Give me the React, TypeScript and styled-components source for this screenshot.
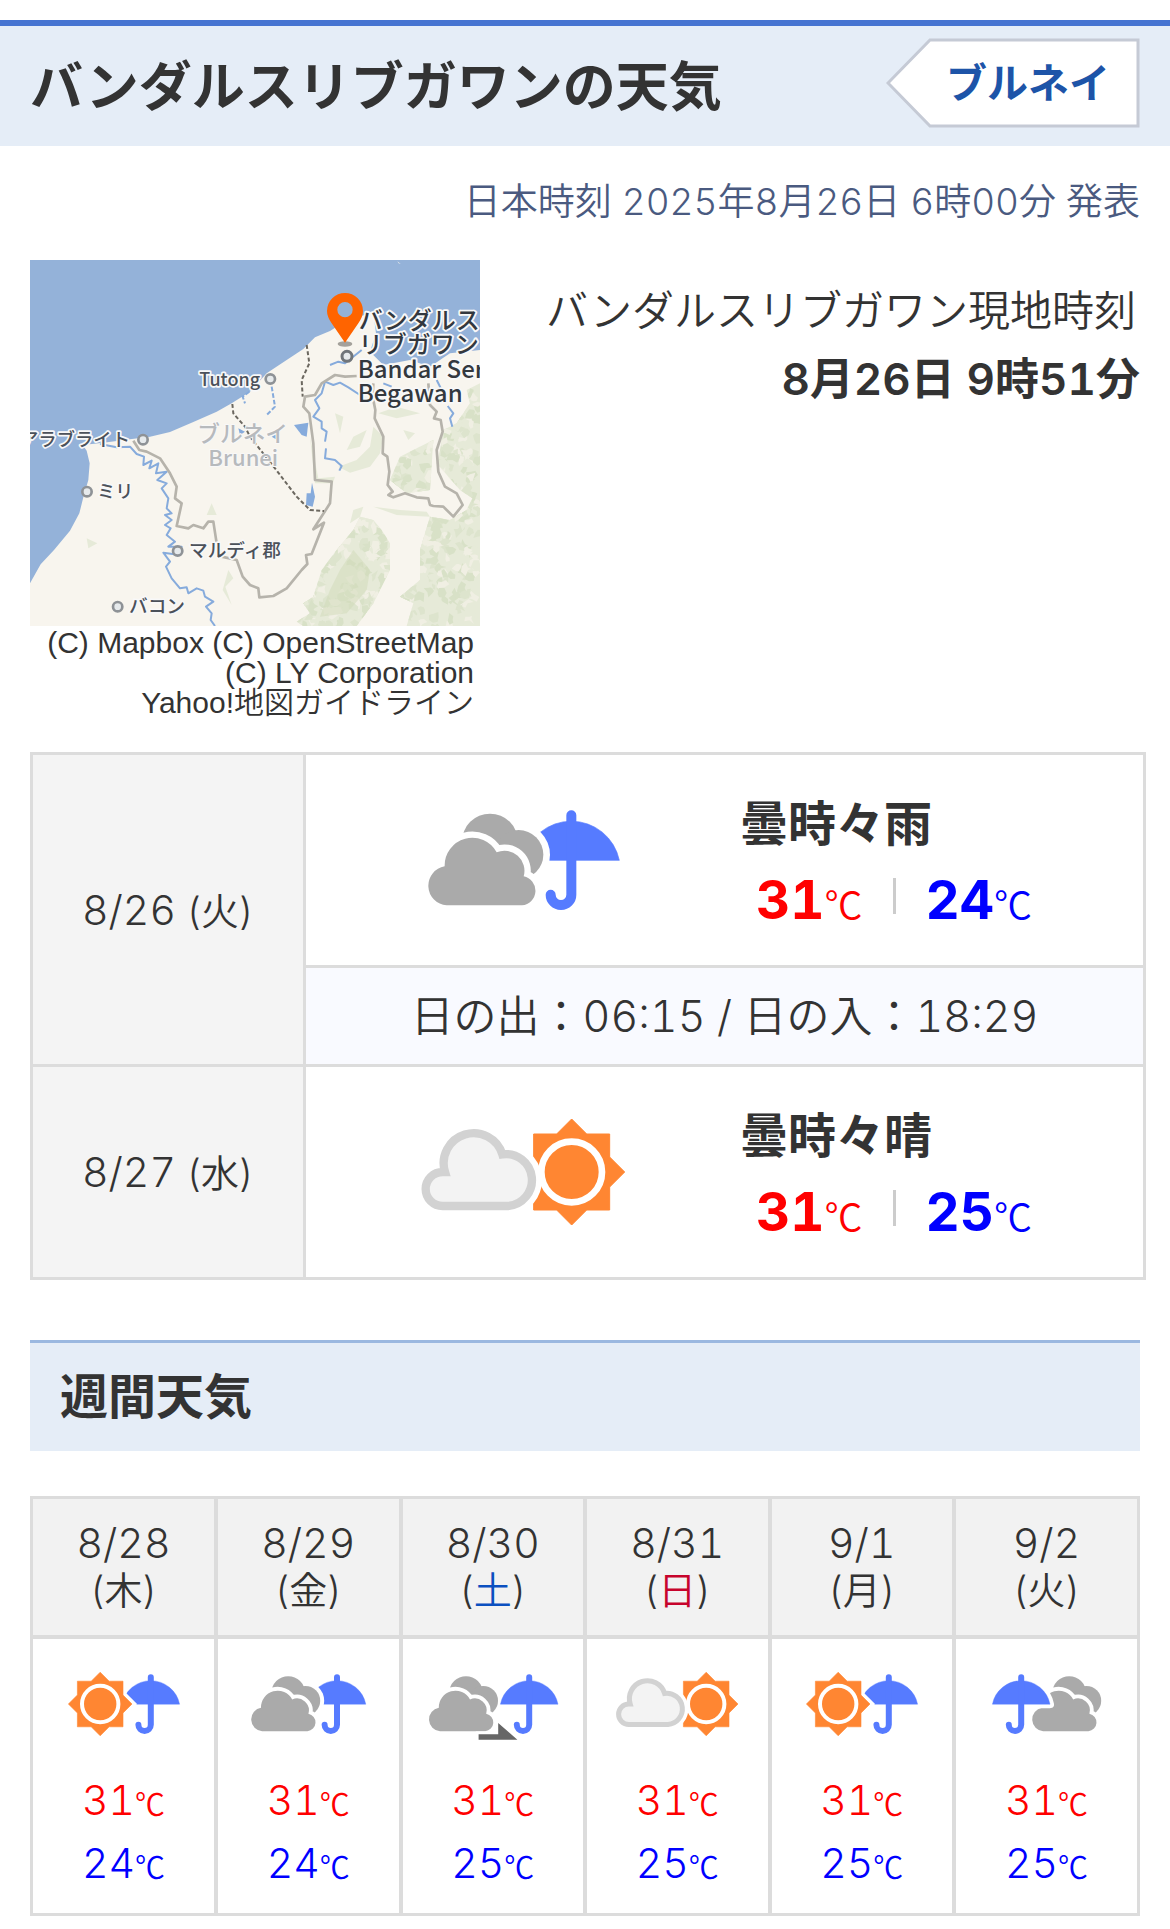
import React from "react";
import styled, { createGlobalStyle, css } from "styled-components";

const GlobalStyle = createGlobalStyle`
  * { box-sizing: border-box; }
  body {
    margin: 0;
    background: #fff;
    color: #333;
    font-family: Inter, "Noto Sans CJK JP", sans-serif;
    font-weight: 350;
    font-variant-numeric: tabular-nums;
  }
  h1, h2, p { margin: 0; }
`;

const Page = styled.main`
  padding: 20px 0 12px;
`;

const Header = styled.header`
  display: flex;
  align-items: flex-start;
  justify-content: space-between;
  height: 126px;
  padding: 12px 30px 0;
  border-top: 6px solid #4674d1;
  background: #e5edf7;
`;

const Title = styled.h1`
  font-size: 53px;
  line-height: 99px;
  font-weight: 600;
`;

const CountryLink = styled.a`
  position: relative;
  display: flex;
  align-items: center;
  justify-content: flex-end;
  width: 254px;
  height: 90px;
  padding: 0 30px 7px 0;
  color: #1d54a8;
  font-size: 41px;
  font-weight: 600;
  text-decoration: none;
`;

const TagShape = styled.svg`
  position: absolute;
  inset: 0;
`;

const TagText = styled.span`
  position: relative;
`;

const Announced = styled.p`
  padding: 29px 30px 0;
  color: #4a5a80;
  font-size: 37px;
  line-height: 54px;
  text-align: right;
`;

const Place = styled.section`
  display: flex;
  justify-content: space-between;
  padding: 31px 30px 34px;
`;

const MapFigure = styled.figure`
  width: 450px;
  margin: 0;
`;

const MapDrawing = styled.svg`
  display: block;
  width: 100%;
`;

const Credit = styled.figcaption`
  padding: 2px 6px 0 0;
  font-family: "Liberation Sans", "Noto Sans CJK JP", sans-serif;
  font-size: 30px;
  line-height: 30px;
  text-align: right;
`;

const Clock = styled.div`
  padding-top: 16px;
  text-align: right;
`;

const ClockName = styled.p`
  padding-right: 4px;
  font-size: 42px;
  line-height: 69px;
`;

const ClockTime = styled.p`
  font-size: 44px;
  line-height: 69px;
  font-weight: 600;
`;

const DayTable = styled.table`
  width: calc(100% - 54px);
  margin-left: 30px;
  border-collapse: collapse;
  table-layout: fixed;
  th, td { padding: 0; border: 3px solid #dcdcdc; }
  th { width: 273px; background: #f4f4f4; font-weight: 350; }
`;

const DayRow = styled.tr`
  height: 213px;
`;

const SunRow = styled.tr`
  height: 99px;
  td {
    background: #f9faff;
    font-size: 43px;
    line-height: 60px;
    text-align: center;
  }
`;

const DateText = styled.span`
  font-size: 41px;
  line-height: 48px;
`;

const WeekdayText = styled.span<{ $inline?: boolean }>`
  margin-left: ${(p) => (p.$inline ? "6px" : "0")};
  font-size: 38px;
  line-height: 46px;
`;

const DayName = styled.span<{ $kind?: "sat" | "sun" }>`
  color: ${(p) => (p.$kind === "sat" ? "#0b50c0" : p.$kind === "sun" ? "#c7042c" : "inherit")};
`;

const Forecast = styled.div`
  display: grid;
  grid-template-columns: 434px 1fr;
  align-items: center;
`;

const ForecastIcon = styled.div`
  display: flex;
  justify-content: center;
`;

const ForecastText = styled.div`
  padding-top: 3px;
`;

const Condition = styled.p`
  font-size: 48px;
  line-height: 72px;
  font-weight: 600;
`;

const BigTemps = styled.div`
  display: flex;
  align-items: center;
  margin-top: 4px;
  padding-left: 16px;
  line-height: 72px;
`;

const Divider = styled.span`
  width: 3px;
  height: 36px;
  margin: 0 30px 8px;
  background: #ccc;
`;

const Temp = styled.span<{ $kind: "high" | "low"; $big?: boolean }>`
  color: ${(p) => (p.$kind === "high" ? "#f00" : "#00f")};
  ${(p) =>
    p.$big
      ? css`
          font-size: 53px;
          font-weight: 700;
        `
      : css`
          display: block;
          font-size: 41px;
          line-height: 63px;
        `}
`;

const Unit = styled.span<{ $big?: boolean }>`
  font-family: "Noto Sans CJK JP", sans-serif;
  font-size: ${(p) => (p.$big ? "38px" : "30px")};
  line-height: 1;
  font-weight: 350;
`;

const WeekHeading = styled.h2`
  margin: 60px 30px 45px;
  padding: 18px 30px;
  border-top: 3px solid #9bb8e0;
  background: #e5edf7;
  font-size: 48px;
  line-height: 72px;
  font-weight: 600;
`;

const WeekTable = styled.table`
  width: calc(100% - 60px);
  margin: 0 30px;
  border: 3px solid #dcdcdc;
  border-collapse: collapse;
  table-layout: fixed;
  text-align: center;
  th, td { padding: 0; vertical-align: top; }
  th + th, td + td { border-left: 4px solid #dcdcdc; }
  th {
    height: 139px;
    padding-top: 20px;
    background: #f2f2f2;
    font-weight: 350;
  }
  td {
    height: 278px;
    padding-top: 29px;
    border-top: 4px solid #dcdcdc;
  }
  th > span { display: block; }
`;

const WeekIcon = styled.div`
  display: flex;
  justify-content: center;
  margin-bottom: 29px;
`;

const Glyph = styled.svg<{ $big?: boolean }>`
  display: block;
  width: ${(p) => (p.$big ? 240 : 144)}px;
  height: ${(p) => (p.$big ? 120 : 72)}px;
`;

type IconKind = "cloud-rain" | "cloud-sun" | "sun-rain" | "cloud-then-rain" | "rain-cloud";

const FRONT_CLOUD =
  "M141 316 A59 59 0 0 1 135 199 A83 83 0 0 1 291 157 A60 60 0 0 1 372 229 A44 44 0 0 1 367 316 Z";
const LIGHT_CLOUD =
  "M129 282 A51 51 0 0 1 129 180 H136 A89 89 0 0 1 308 127 A78 78 0 1 1 325 282 Z";

function Umbrella({ x, gap }: { x: number; gap?: boolean }) {
  return (
    <g transform={`translate(${x} 0)`}>
      {gap && <path d="M-144 181 A147 147 0 0 1 144 181 Z" fill="#fff" stroke="#fff" strokeWidth="40" strokeLinejoin="round" />}
      <path d="M-144 181 A147 147 0 0 1 144 181 Z" fill="#567bff" stroke="#567bff" strokeWidth="2" />
      <path d="M0 46 V284 A31 31 0 0 1 -62 284" fill="none" stroke="#567bff" strokeWidth="30" strokeLinecap="round" />
    </g>
  );
}

function DarkCloud({ x }: { x: number }) {
  return (
    <g transform={`translate(${x} 0)`} fill="#aaa">
      <circle cx="357" cy="164" r="94" fill="#fff" />
      <circle cx="271" cy="125" r="84" />
      <circle cx="357" cy="164" r="74" />
      <path d={FRONT_CLOUD} fill="#fff" stroke="#fff" strokeWidth="38" />
      <path d={FRONT_CLOUD} />
    </g>
  );
}

function Sun({ x, gap }: { x: number; gap?: boolean }) {
  const star = "M0 -159 L45 -114 H114 V-45 L159 0 L114 45 V114 H45 L0 159 L-45 114 H-114 V45 L-159 0 L-114 -45 V-114 H-45 Z";
  return (
    <g transform={`translate(${x} 180)`}>
      {gap && <path d={star} fill="#fff" stroke="#fff" strokeWidth="36" />}
      <path d={star} fill="#ff8632" stroke="#ff8632" strokeWidth="3" strokeLinejoin="round" />
      <circle r="91" fill="none" stroke="#fff" strokeWidth="20" />
    </g>
  );
}

function WeatherIcon({ kind, label, big }: { kind: IconKind; label: string; big?: boolean }) {
  return (
    <Glyph viewBox="0 0 720 360" role="img" aria-label={label} $big={big}>
      {kind === "cloud-rain" && (
        <>
          <Umbrella x={505} />
          <DarkCloud x={-10} />
        </>
      )}
      {kind === "cloud-sun" && (
        <>
          <Sun x={506} />
          <g transform="translate(-10 0)">
            <path d={LIGHT_CLOUD} fill="#fff" stroke="#fff" strokeWidth="60" />
            <path d={LIGHT_CLOUD} fill="#f3f3f3" stroke="#d2d2d2" strokeWidth="25" />
          </g>
        </>
      )}
      {kind === "sun-rain" && (
        <>
          <Umbrella x={494} />
          <Sun x={241} gap />
        </>
      )}
      {kind === "cloud-then-rain" && (
        <>
          <DarkCloud x={-46} />
          <path d="M288 331 H386 V275 L482 359 H288 Z" fill="#666" stroke="#fff" strokeWidth="28" paintOrder="stroke" />
          <Umbrella x={541} />
        </>
      )}
      {kind === "rain-cloud" && (
        <>
          <DarkCloud x={200} />
          <Umbrella x={231} gap />
        </>
      )}
    </Glyph>
  );
}

const places = [
  { name: "Tutong", tx: 538, ty: 407, cx: 751, cy: 387, size: 54 },
  { name: "アラブライト", tx: 0, ty: 588, cx: 369, cy: 569, size: 55 },
  { name: "ミリ", tx: 232, ty: 744, cx: 201, cy: 725, size: 54 },
  { name: "マルディ郡", tx: 507, ty: 922, cx: 473, cy: 903, size: 56 },
  { name: "バコン", tx: 327, ty: 1089, cx: 293, cy: 1070, size: 56 },
];

const forests = [
  "M1000 840 L1020 800 L1060 810 L1085 840 L1110 880 L1110 960 L1080 1020 L1060 1060 L1010 1128 H850 L830 1115 L870 1090 L850 1060 L880 1040 L905 960 L950 900 Z",
  "M1230 800 L1290 810 L1340 780 L1380 700 V1128 H1160 L1180 1060 L1140 1040 L1200 990 L1200 900 Z",
  "M1380 400 L1340 420 L1350 460 L1310 520 L1270 540 L1260 600 L1250 640 L1320 720 L1380 760 Z",
  "M1180 600 L1240 570 L1230 720 L1160 730 L1110 690 L1140 620 Z",
];

const thinWoods = [
  "M1060 530 L1090 560 L1080 610 L1050 650 L990 668 L955 650 L1010 630 L1050 590 Z",
  "M1075 490 L1130 470 L1200 490 L1130 505 Z",
  "M1000 560 L1040 540 L1020 590 L980 600 Z",
  "M1150 540 L1185 550 L1165 570 Z",
  "M945 490 L970 500 L960 550 Z",
  "M575 760 L590 795 L560 795 Z",
  "M200 865 L232 880 L205 895 Z",
  "M625 960 L640 985 L616 1010 L635 1065 L608 1020 Z",
  "M1000 780 L1030 770 L1020 800 L990 820 Z",
  "M1060 770 L1140 780 L1220 785 L1230 800 L1130 795 Z",
  "M870 560 L885 700 L935 700 L925 740 L945 680 L895 685 Z",
];

/* Jagged leaf-like patches spread over the wooded hills, from a fixed seed. */
function woodPatches() {
  let seed = 7;
  const next = () => {
    seed = (seed * 16807) % 2147483647;
    return seed / 2147483647;
  };
  const tones = ["#d8e1c7", "#f0efe3", "#dde4cd", "#e6ead8"];
  return Array.from({ length: 900 }, (_, i) => {
    const x = 830 + next() * 550;
    const y = 400 + next() * 728;
    const points = Array.from({ length: 7 }, (_unused, k) => {
      const angle = (k / 7) * Math.PI * 2;
      const r = 4 + next() * 18;
      return `${Math.round(x + Math.cos(angle) * r)},${Math.round(y + Math.sin(angle) * r)}`;
    }).join(" ");
    return { points, fill: tones[i % 4] };
  });
}

const patches = woodPatches();

function AreaMap() {
  return (
    <MapDrawing viewBox="30 30 1350 1098" role="img" aria-label="バンダルスリブガワン周辺の地図">
      <defs>
        <clipPath id="woods">
          {forests.map((d) => (
            <path key={d} d={d} />
          ))}
        </clipPath>
      </defs>
      <rect x="30" y="30" width="1350" height="1098" fill="#94b2d9" />
      <path
        d="M30 1000 L62 943 L102 900 L150 842 L178 790 L190 742 L205 690 L209 640 L200 602 L188 585 L250 578 L330 568 L390 560 L450 546 L520 516 L590 485 L635 460 L690 425 L740 370 L800 330 L850 297 L885 262 L930 243 L990 205 L1060 190 L1068 250 L1050 305 L1090 345 L1170 330 L1230 350 L1290 310 L1380 300 V1128 H30 Z"
        fill="#f8f5ee"
      />
      <g fill="#e6ead8">
        {forests.map((d) => (
          <path key={d} d={d} />
        ))}
        {thinWoods.map((d) => (
          <path key={d} d={d} />
        ))}
      </g>
      <g clipPath="url(#woods)">
        {patches.map((p) => (
          <polygon key={p.points} points={p.points} fill={p.fill} />
        ))}
      </g>
      <path d="M960 960 L1000 900 L1050 960 L1040 1020 L980 1090 L900 1100 L930 1020 Z" fill="#cfdab8" opacity="0.5" />
      <g fill="none" stroke="#86abdc" strokeWidth="6" strokeLinejoin="round">
        <path d="M240 582 L290 592 L330 590 L350 612 L372 620 L370 645 L395 632 L388 655 L415 640 L408 670 L440 665 L412 690 L440 700 L425 715 L445 745 L440 775 L455 790 L435 795 L455 810 L435 825 L452 835 L440 855 L465 875 L445 890 L485 890 L480 915 L430 908 L450 935 L438 950 L455 985 L480 1015 L500 1012 L505 1030 L530 1015 L550 1022 L555 1040 L580 1055 L558 1070 L575 1090 L572 1110 L585 1128" />
        <path d="M688 425 L668 440 L675 460 M755 410 L765 470 L740 495" strokeDasharray="14 6" />
        <path d="M1020 435 L985 412 L960 398 L940 405 L915 395 L905 430 L885 450 L898 475 L880 500 L905 515 L905 535 L920 545 L915 575" />
        <path d="M918 595 L915 625 L945 630 L965 648 L958 662" />
        <path d="M1283 468 L1300 490 L1290 505 L1297 530 M1250 390 L1265 420 M930 345 L955 335 L975 340 L1025 300 M1090 400 L1115 410" />
      </g>
      <g fill="#86abdc">
        <path d="M822 525 L865 518 L860 560 L845 555 Z" />
        <path d="M876 698 L885 740 L878 770 L858 765 L860 730 L872 730 Z" />
        <path d="M655 535 L675 545 L660 555 Z M755 560 L775 550 L768 568 Z" />
      </g>
      <g fill="none" stroke="#b6b3ab" strokeWidth="8" strokeLinejoin="round">
        <path d="M340 572 L358 600 L380 605 L420 625 L450 670 L470 710 L465 745 L485 760 L470 828 L505 835 L520 825 L550 835 L565 815 L580 815 L590 880 L605 920 L650 930 L668 980 L690 1005 L715 1015 L718 1042 L760 1038 L800 1015 L845 960 L862 942 L858 915 L875 912 L912 818 L880 838 L930 760 L935 695 L885 690 L880 580 L868 490 L850 470 L855 440 L885 435 L905 400 L945 375 L975 380 L1010 378" />
        <path d="M1060 400 L1058 440 L1066 480 L1064 505 L1090 560 L1088 610 L1102 620 L1108 665 L1103 705 L1118 725 L1105 735 L1120 742 L1155 730 L1190 742 L1225 745 L1230 765 L1240 768 L1270 770 L1300 800 L1328 765 L1310 730 L1275 710 L1255 665 L1250 600 L1268 545 L1262 510 L1242 505 L1250 485 L1230 465 L1225 400" />
      </g>
      <g fill="none" stroke="#6b675f" strokeWidth="6" strokeDasharray="12 7">
        <path d="M860 285 L868 340 L845 390 L848 440" />
        <path d="M637 462 L640 490 L675 530 L690 560 L765 655 L830 740 L870 780 L912 783" />
      </g>
      <g fontFamily='"Noto Sans CJK JP", sans-serif' stroke="#f8f8f8" strokeLinejoin="round" paintOrder="stroke">
        <g fill="#b7babd" fontSize="68" fontWeight="500" strokeWidth="6">
          <text x="532" y="575">ブルネイ</text>
          <text x="565" y="647" fontSize="66">Brunei</text>
        </g>
        <g fill="#4b515a" fontWeight="500" strokeWidth="10">
          {places.map((p) => (
            <text key={p.name} x={p.tx} y={p.ty} fontSize={p.size}>
              {p.name}
            </text>
          ))}
        </g>
        <g fill="#33383f" fontSize="72" fontWeight="500" strokeWidth="11">
          <text x="1016" y="236">バンダルス</text>
          <text x="1016" y="310">リブガワン</text>
          <text x="1013" y="383">Bandar Seri</text>
          <text x="1013" y="456">Begawan</text>
        </g>
      </g>
      <g fill="#e6eaec" stroke="#8e9296" strokeWidth="8">
        {places.map((p) => (
          <circle key={p.name} cx={p.cx} cy={p.cy} r="14" />
        ))}
        <circle cx="981" cy="319" r="15" stroke="#70757a" strokeWidth="9" />
      </g>
      <ellipse cx="975" cy="282" rx="22" ry="8" fill="#8f8c86" opacity="0.8" />
      <path
        d="M975 278 L935 220 Q921 200 921 183 A54 54 0 0 1 1029 183 Q1029 200 1015 220 Z M975 156 A23 23 0 1 0 975 202 A23 23 0 1 0 975 156 Z"
        fill="#ff6400"
        fillRule="evenodd"
      />
      <path d="M1132 34 L1142 42 L1136 40 Z" fill="#f8f5ee" />
    </MapDrawing>
  );
}

function ForecastBlock({ kind, text, high, low }: { kind: IconKind; text: string; high: number; low: number }) {
  return (
    <Forecast>
      <ForecastIcon>
        <WeatherIcon kind={kind} label={text} big />
      </ForecastIcon>
      <ForecastText>
        <Condition>{text}</Condition>
        <BigTemps>
          <Temp $kind="high" $big>
            {high}
            <Unit $big>℃</Unit>
          </Temp>
          <Divider />
          <Temp $kind="low" $big>
            {low}
            <Unit $big>℃</Unit>
          </Temp>
        </BigTemps>
      </ForecastText>
    </Forecast>
  );
}

interface WeekDay {
  date: string;
  day: string;
  tone?: "sat" | "sun";
  kind: IconKind;
  label: string;
  high: number;
  low: number;
}

const week: WeekDay[] = [
  { date: "8/28", day: "木", kind: "sun-rain", label: "晴時々雨", high: 31, low: 24 },
  { date: "8/29", day: "金", kind: "cloud-rain", label: "曇時々雨", high: 31, low: 24 },
  { date: "8/30", day: "土", tone: "sat", kind: "cloud-then-rain", label: "曇後雨", high: 31, low: 25 },
  { date: "8/31", day: "日", tone: "sun", kind: "cloud-sun", label: "曇時々晴", high: 31, low: 25 },
  { date: "9/1", day: "月", kind: "sun-rain", label: "晴時々雨", high: 31, low: 25 },
  { date: "9/2", day: "火", kind: "rain-cloud", label: "雨時々曇", high: 31, low: 25 },
];

export default function App() {
  return (
    <>
      <GlobalStyle />
      <Page lang="ja">
        <Header>
          <Title>バンダルスリブガワンの天気</Title>
          <CountryLink href="#brunei">
            <TagShape width="254" height="90" viewBox="0 0 254 90" aria-hidden="true">
              <path d="M252 2 H44 L2 45 L44 88 H252 Z" fill="#fff" stroke="#c5cad5" strokeWidth="3" />
            </TagShape>
            <TagText>ブルネイ</TagText>
          </CountryLink>
        </Header>
        <Announced>日本時刻 2025年8月26日 6時00分 発表</Announced>
        <Place>
          <MapFigure>
            <AreaMap />
            <Credit>
              (C) Mapbox (C) OpenStreetMap
              <br />
              (C) LY Corporation
              <br />
              Yahoo!地図ガイドライン
            </Credit>
          </MapFigure>
          <Clock>
            <ClockName>バンダルスリブガワン現地時刻</ClockName>
            <ClockTime>8月26日 9時51分</ClockTime>
          </Clock>
        </Place>
        <DayTable>
          <tbody>
            <DayRow>
              <th scope="row" rowSpan={2}>
                <DateText>8/26</DateText> <WeekdayText $inline>(火)</WeekdayText>
              </th>
              <td>
                <ForecastBlock kind="cloud-rain" text="曇時々雨" high={31} low={24} />
              </td>
            </DayRow>
            <SunRow>
              <td>日の出：06:15 / 日の入：18:29</td>
            </SunRow>
            <DayRow>
              <th scope="row">
                <DateText>8/27</DateText> <WeekdayText $inline>(水)</WeekdayText>
              </th>
              <td>
                <ForecastBlock kind="cloud-sun" text="曇時々晴" high={31} low={25} />
              </td>
            </DayRow>
          </tbody>
        </DayTable>
        <WeekHeading>週間天気</WeekHeading>
        <WeekTable>
          <thead>
            <tr>
              {week.map((d) => (
                <th key={d.date} scope="col">
                  <DateText>{d.date}</DateText>
                  <WeekdayText>
                    (<DayName $kind={d.tone}>{d.day}</DayName>)
                  </WeekdayText>
                </th>
              ))}
            </tr>
          </thead>
          <tbody>
            <tr>
              {week.map((d) => (
                <td key={d.date}>
                  <WeekIcon>
                    <WeatherIcon kind={d.kind} label={d.label} />
                  </WeekIcon>
                  <Temp $kind="high">
                    {d.high}
                    <Unit>℃</Unit>
                  </Temp>
                  <Temp $kind="low">
                    {d.low}
                    <Unit>℃</Unit>
                  </Temp>
                </td>
              ))}
            </tr>
          </tbody>
        </WeekTable>
      </Page>
    </>
  );
}
